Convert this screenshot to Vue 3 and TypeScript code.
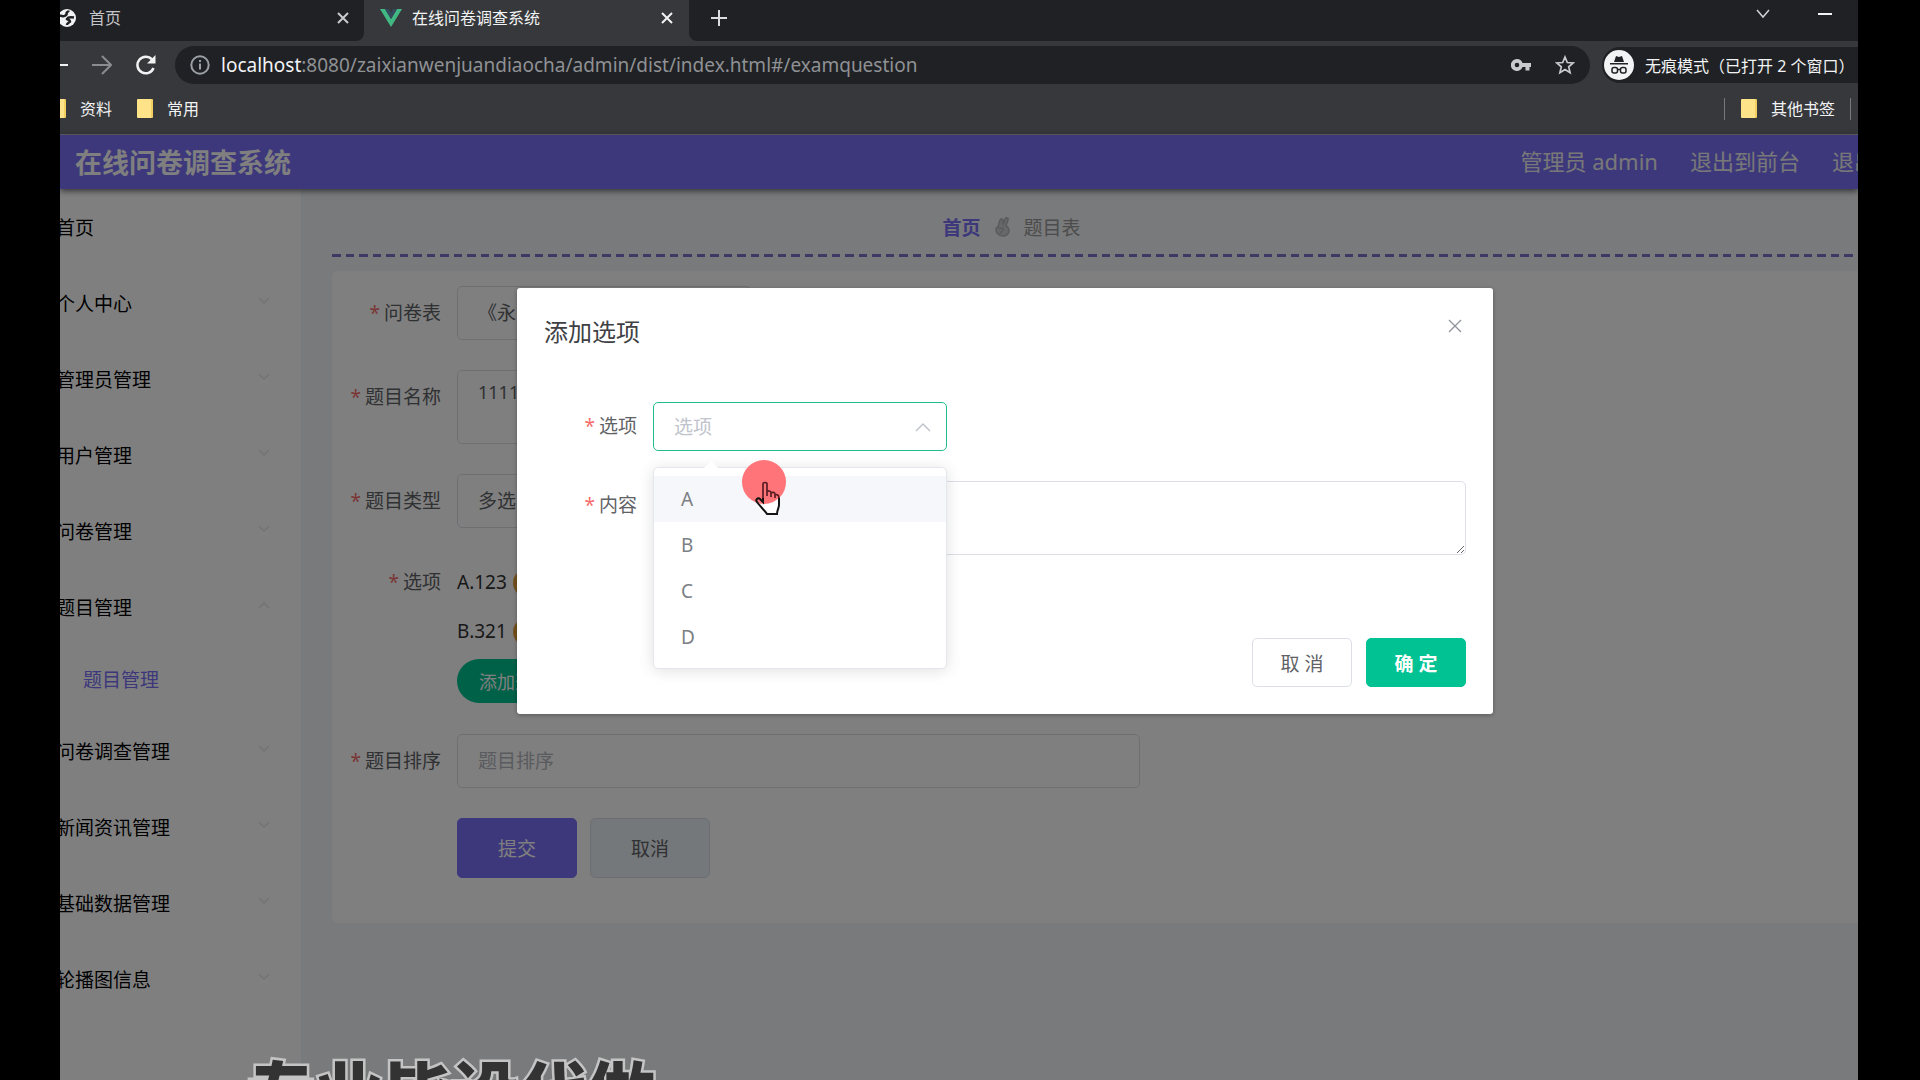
<script setup lang="ts">
import { ref } from 'vue'

interface MenuItem {
  name: string
  arrow?: 'down' | 'up'
  children?: string[]
}

const menu: MenuItem[] = [
  { name: '首页' },
  { name: '个人中心', arrow: 'down' },
  { name: '管理员管理', arrow: 'down' },
  { name: '用户管理', arrow: 'down' },
  { name: '问卷管理', arrow: 'down' },
  { name: '题目管理', arrow: 'up', children: ['题目管理'] },
  { name: '问卷调查管理', arrow: 'down' },
  { name: '新闻资讯管理', arrow: 'down' },
  { name: '基础数据管理', arrow: 'down' },
  { name: '轮播图信息', arrow: 'down' },
]

const answers = ['A.123', 'B.321']
const letters = ['A', 'B', 'C', 'D']
const hovered = ref('A')
const title = ref('1111')
const order = ref('')
const content = ref('')
</script>

<template>
  <div class="stage">
    <div class="browser">
      <div class="tabs">
        <div class="tab idle">
          <svg class="globe" width="18" height="18" viewBox="0 0 18 18">
            <circle cx="9" cy="9" r="9" fill="#f1f3f4" />
            <path d="M1.500 7c2-1 3 1 5 0 1-1 3-1 2-3 0-1 2-1 2-2.500M9 16c0-2 2-2 3-3.500 0-2-2-1.500-3-2.500 1-2 4-2 7-1.500" fill="none" stroke="#202124" stroke-width="2.500" />
          </svg>
          <span class="tab-name">首页</span>
          <button class="icon-btn" type="button">
            <svg width="12" height="12" viewBox="0 0 12 12"><path d="M1 1l10 10M11 1L1 11" stroke="#c8cacd" stroke-width="2" /></svg>
          </button>
        </div>
        <div class="tab current">
          <svg width="22" height="18" viewBox="0 0 22 18">
            <path d="M0 0h5l6 10 6-10h5L11 18z" fill="#41b883" />
            <path d="M5 0h4l2 4 2-4h4l-6 10z" fill="#35495e" />
          </svg>
          <span class="tab-name">在线问卷调查系统</span>
          <button class="icon-btn" type="button">
            <svg width="12" height="12" viewBox="0 0 12 12"><path d="M1 1l10 10M11 1L1 11" stroke="#f1f3f4" stroke-width="2" /></svg>
          </button>
        </div>
        <div class="tab-rest">
          <button class="icon-btn" type="button">
            <svg width="16" height="16" viewBox="0 0 16 16"><path d="M8 0v16M0 8h16" stroke="#dadce0" stroke-width="2" /></svg>
          </button>
          <span class="grow"></span>
          <div class="window-btns">
            <button class="icon-btn" type="button">
              <svg width="14" height="10" viewBox="0 0 14 10"><path d="M1 1l6 7 6-7" fill="none" stroke="#d0d2d5" stroke-width="1.500" /></svg>
            </button>
            <button class="icon-btn" type="button">
              <svg width="14" height="10" viewBox="0 0 14 10"><path d="M0 5h14" stroke="#f1f3f4" stroke-width="2" /></svg>
            </button>
          </div>
        </div>
      </div>

      <div class="toolbar">
        <button class="icon-btn" type="button">
          <svg width="20" height="20" viewBox="0 0 20 20"><path d="M20 10H2M10 1l-9 9 9 9" fill="none" stroke="#f1f3f4" stroke-width="2" /></svg>
        </button>
        <button class="icon-btn" type="button">
          <svg width="20" height="20" viewBox="0 0 20 20"><path d="M0 10h18M10 1l9 9-9 9" fill="none" stroke="#8b8c8f" stroke-width="2" /></svg>
        </button>
        <button class="icon-btn" type="button">
          <svg width="20" height="20" viewBox="0 0 20 20">
            <path d="M17.500 13A8.300 8.300 0 1 1 16 4.500" fill="none" stroke="#f1f3f4" stroke-width="2.500" />
            <path d="M19.500 0v8.500H11z" fill="#f1f3f4" />
          </svg>
        </button>
        <div class="address">
          <svg width="20" height="20" viewBox="0 0 20 20">
            <circle cx="10" cy="10" r="8.700" fill="none" stroke="#9aa0a6" stroke-width="2" />
            <path d="M10 8.500v6M10 5v2" stroke="#9aa0a6" stroke-width="2" />
          </svg>
          <span class="url"><b>localhost</b>:8080/zaixianwenjuandiaocha/admin/dist/index.html#/examquestion</span>
          <button class="icon-btn" type="button">
            <svg width="20" height="12" viewBox="0 0 20 12">
              <path fill-rule="evenodd" d="M6 0a6 6 0 0 1 5.500 4H20v4h-1.500v3.500h-4V8h-3A6 6 0 1 1 6 0zm0 3.700a2.300 2.300 0 1 0 0 4.600 2.300 2.300 0 0 0 0-4.600z" fill="#c8cacd" />
            </svg>
          </button>
          <button class="icon-btn" type="button">
            <svg width="20" height="20" viewBox="0 0 20 20">
              <path d="M10 2l2.300 5.500 5.900.500-4.500 3.900 1.400 5.800L10 14.600l-5.100 3.100 1.400-5.800L1.800 8l5.900-.500z" fill="none" stroke="#c8cacd" stroke-width="1.700" />
            </svg>
          </button>
        </div>
        <div class="incognito">
          <svg width="30" height="30" viewBox="0 0 30 30">
            <circle cx="15" cy="15" r="15" fill="#f1f3f4" />
            <path d="M10 12l2-6 3 1 3-1 2 6zM6 13h18v1.500H6z" fill="#202124" />
            <rect x="8" y="17.500" width="5.500" height="5.500" rx="2" fill="none" stroke="#202124" stroke-width="1.500" />
            <rect x="16.500" y="17.500" width="5.500" height="5.500" rx="2" fill="none" stroke="#202124" stroke-width="1.500" />
            <path d="M13.500 19.500h3" stroke="#202124" stroke-width="1.500" />
          </svg>
          <span>无痕模式（已打开 2 个窗口）</span>
        </div>
      </div>

      <div class="bookmarks">
        <a href="#" class="bookmark"><i class="folder"></i>资料</a>
        <a href="#" class="bookmark"><i class="folder"></i>常用</a>
        <span class="grow"></span>
        <a href="#" class="bookmark others"><i class="folder"></i>其他书签</a>
      </div>

      <div class="app">
        <header class="app-header">
          <h1>在线问卷调查系统</h1>
          <nav class="user-links">
            <span>管理员 admin</span>
            <a href="#">退出到前台</a>
            <a href="#">退出登录</a>
          </nav>
        </header>

        <div class="app-body">
          <aside class="sidebar">
            <template v-for="item in menu" :key="item.name">
              <a href="#" class="menu-item">
                <span>{{ item.name }}</span>
                <svg v-if="item.arrow" :class="item.arrow" width="12" height="8" viewBox="0 0 12 8">
                  <path d="M1 1l5 5 5-5" fill="none" stroke="#e6e6e6" stroke-width="1.500" />
                </svg>
              </a>
              <a v-for="child in item.children" :key="child" href="#" class="menu-child">{{ child }}</a>
            </template>
          </aside>

          <main class="main">
            <nav class="crumbs">
              <a href="#">首页</a>
              <svg width="15" height="20" viewBox="0 0 15 20" fill="none" stroke="#b4b6ba" stroke-width="1.500">
                <path d="M3 10L5 3c1-2 3-1 3 0v5l2-6c1-2 4-1 3 1l-2 6c3 1 3 3 3 5 0 3-3 5-6 5s-7-2-7-6c0-2 1-4 3-3z" fill="#cdd0d4" />
                <path d="M4 12c2-2 5-1 4 1s-3 2-3 4" />
              </svg>
              <span>题目表</span>
            </nav>
            <div class="dashes"></div>

            <form class="card" @submit.prevent>
              <div class="row">
                <label class="label" for="paper">问卷表</label>
                <select id="paper" class="field short"><option>《永</option></select>
              </div>
              <div class="row">
                <label class="label" for="title">题目名称</label>
                <textarea id="title" v-model="title" class="field area"></textarea>
              </div>
              <div class="row">
                <label class="label" for="kind">题目类型</label>
                <select id="kind" class="field short"><option>多选</option></select>
              </div>
              <div class="row answers">
                <span class="label">选项</span>
                <div class="answer-list">
                  <div v-for="a in answers" :key="a" class="answer">
                    <span>{{ a }}</span>
                    <button type="button" class="remove"></button>
                  </div>
                  <button type="button" class="add">添加选项</button>
                </div>
              </div>
              <div class="row">
                <label class="label" for="order">题目排序</label>
                <input id="order" v-model="order" class="field wide" type="text" placeholder="题目排序" />
              </div>
              <div class="actions">
                <button type="submit" class="submit">提交</button>
                <button type="button" class="reset">取消</button>
              </div>
            </form>
          </main>
        </div>

        <div class="mask">
          <section class="dialog" role="dialog">
            <div class="dialog-head">
              <h2>添加选项</h2>
              <button class="icon-btn" type="button">
                <svg width="14" height="14" viewBox="0 0 14 14"><path d="M1 1l12 12M13 1L1 13" stroke="#909399" stroke-width="1.300" /></svg>
              </button>
            </div>
            <div class="dialog-row">
              <label class="label" for="letter">选项</label>
              <div class="picker">
                <select id="letter" class="picker-box"><option>选项</option></select>
                <svg class="picker-arrow" width="16" height="10" viewBox="0 0 16 10">
                  <path d="M1 9l7-7 7 7" fill="none" stroke="#c0c4cc" stroke-width="1.500" />
                </svg>
                <ul class="options" role="listbox">
                  <li
                    v-for="l in letters"
                    :key="l"
                    role="option"
                    :class="{ hover: l === hovered }"
                    @mouseenter="hovered = l"
                  >{{ l }}</li>
                </ul>
              </div>
            </div>
            <div class="dialog-row">
              <label class="label" for="content">内容</label>
              <textarea id="content" v-model="content" class="field area full"></textarea>
            </div>
            <div class="dialog-foot">
              <button type="button" class="cancel">取 消</button>
              <button type="button" class="confirm">确 定</button>
            </div>
            <div class="pointer">
              <svg width="44" height="56" viewBox="0 0 44 56">
                <circle cx="22" cy="22" r="22" fill="#ff7479" />
                <path d="M14 44a22 22 0 0 0 23-6l1 3-3 9-3 4H24l-5-3z" fill="#fff" />
                <path d="M21 39V24c0-2 4-2 4 0v9M25 36v-4c1-2 4-1 4 1v4M29 37v-4c1-1 4-1 4 1v4M33 38v-3c2-1 4 0 4 3" fill="none" stroke="#5c1c24" stroke-width="1.700" />
                <path d="M37 38v7c0 3-2 5-2 9H25c-2-3-8-9-10-12-2-2 1-5 3-3l3 3v-4" fill="none" stroke="#141414" stroke-width="2" />
              </svg>
            </div>
          </section>
        </div>
      </div>
      <div class="caption">专业毕设代做</div>
    </div>
  </div>
</template>

<style>
body {
  background: #000;
}
</style>

<style scoped>
.stage {
  height: 100vh;
  padding: 0 62px 0 60px;
  background: #000;
  font-family: 'Noto Sans', 'Noto Sans CJK SC', sans-serif;
}
.stage *,
.stage {
  box-sizing: border-box;
}
.browser {
  position: relative;
  display: flex;
  flex-direction: column;
  height: 100%;
  overflow: hidden;
  background: #37383b;
}
button,
input,
select,
textarea {
  font-family: inherit;
  margin: 0;
}
a {
  color: inherit;
  text-decoration: none;
}
svg {
  display: block;
  flex: none;
}
.grow {
  flex: 1;
}
.icon-btn {
  display: flex;
  flex: none;
  padding: 0;
  border: 0;
  background: none;
}

/* browser chrome */
.tabs {
  display: flex;
  height: 41px;
  font-size: 16px;
  line-height: 24px;
}
.tab {
  display: flex;
  align-items: center;
  flex: none;
  padding-bottom: 5px;
  white-space: nowrap;
}
.tab-name {
  flex: 1;
}
.idle {
  width: 304px;
  padding-right: 15px;
  border-radius: 0 0 8px 0;
  background: #202124;
  color: #c4c6c9;
}
.globe {
  margin: 0 13px 0 -2px;
}
.current {
  width: 325px;
  gap: 10px;
  padding-left: 16px;
  padding-right: 16px;
  color: #f1f3f4;
}
.tab-rest {
  display: flex;
  align-items: center;
  flex: 1;
  padding: 0 26px 6px 22px;
  border-radius: 0 0 0 8px;
  background: #202124;
}
.window-btns {
  display: flex;
  gap: 48px;
  padding-bottom: 8px;
}
.toolbar {
  display: flex;
  align-items: center;
  height: 48px;
}
.toolbar > .icon-btn {
  margin-right: 24px;
}
.toolbar > .icon-btn:first-child {
  margin-left: -12px;
}
.toolbar > .icon-btn:nth-child(3) {
  margin-right: 19px;
}
.address {
  display: flex;
  align-items: center;
  flex: 1;
  height: 38px;
  padding: 0 15px;
  border-radius: 19px;
  background: #202124;
}
.url {
  flex: 1;
  padding-left: 11px;
  color: #8f9195;
  font-size: 19px;
  line-height: 28px;
  white-space: nowrap;
}
.url b {
  color: #f1f3f4;
  font-weight: 400;
}
.address .icon-btn + .icon-btn {
  margin-left: 24px;
}
.incognito {
  display: flex;
  align-items: center;
  flex: none;
  gap: 11px;
  width: 256px;
  height: 36px;
  margin-left: 12px;
  padding-left: 2px;
  border-radius: 18px 0 0 18px;
  background: #202124;
  color: #f1f3f4;
  font-size: 16px;
  white-space: nowrap;
}
.bookmarks {
  display: flex;
  align-items: center;
  height: 46px;
  padding: 0 7px 6px 0;
  border-bottom: 1px solid #606166;
  color: #f1f3f4;
  font-size: 16px;
  line-height: 22px;
}
.bookmark {
  display: flex;
  align-items: center;
  gap: 14px;
  margin-right: 25px;
}
.bookmark:first-child {
  margin-left: -10px;
}
.folder {
  width: 16px;
  height: 19px;
  border-radius: 1px;
  border-right: 2px solid #f3cf62;
  background: #ffe389;
}
.others {
  margin-right: 0;
  padding: 0 15px 0 16px;
  border-left: 1px solid #77787c;
  border-right: 1px solid #77787c;
}

/* admin page */
.app {
  position: relative;
  display: flex;
  flex-direction: column;
  flex: 1;
  min-height: 0;
}
.app-header {
  position: relative;
  display: flex;
  align-items: center;
  justify-content: space-between;
  height: 54px;
  padding-left: 15px;
  background: #7a70f6;
  box-shadow: 0 2px 6px rgba(0, 0, 0, 0.6);
  color: #fff;
}
.app-header h1 {
  margin: 0;
  font-size: 27px;
  line-height: 40px;
  padding-top: 2px;
}
.user-links {
  display: flex;
  gap: 32px;
  margin-right: -62px;
  padding-bottom: 2px;
  color: #f0f0f0;
  font-size: 22px;
  line-height: 30px;
  white-space: nowrap;
}
.app-body {
  display: flex;
  flex: 1;
  min-height: 0;
}
.sidebar {
  flex: none;
  width: 241px;
  padding-top: 1px;
  background: #fff;
  font-size: 19px;
  line-height: 28px;
  color: #000;
}
.menu-item {
  display: flex;
  align-items: center;
  justify-content: space-between;
  height: 76px;
  margin-left: -4px;
  padding-right: 31px;
}
.menu-item svg {
  margin-bottom: 6px;
}
.up {
  transform: rotate(180deg);
}
.menu-child {
  display: flex;
  align-items: center;
  height: 68px;
  padding-left: 23px;
  color: #7a70f6;
}
.main {
  flex: 1;
  min-width: 0;
  padding: 23px 0 0 31px;
  background: #f2f4f7;
}
.crumbs {
  display: flex;
  align-items: center;
  justify-content: center;
  gap: 14px;
  height: 30px;
  padding-right: 167px;
  color: #999;
  font-size: 19px;
}
.crumbs a {
  color: #7a70f6;
  font-weight: 700;
}
.dashes {
  height: 3px;
  margin: 12px 0 14px;
  background: repeating-linear-gradient(
    to right,
    #7a70c8 0 9px,
    transparent 9px 14px,
    #7a70c8 14px 22px,
    transparent 22px 27px
  );
}
.card {
  display: flex;
  flex-direction: column;
  gap: 30px;
  padding: 15px 0 45px;
  border-radius: 6px 0 0 6px;
  background: #fff;
}
.row,
.dialog-row {
  display: flex;
}
.label {
  flex: none;
  width: 109px;
  margin-right: 16px;
  color: #606266;
  font-size: 19px;
  line-height: 54px;
  text-align: right;
}
.label::before {
  content: '*';
  margin-right: 4px;
  color: #f56c6c;
}
.field {
  display: block;
  height: 54px;
  padding: 0 20px;
  border: 1px solid #dcdfe6;
  border-radius: 5px;
  outline: 0;
  appearance: none;
  background: #fff;
  color: #606266;
  font-size: 19px;
}
.field::placeholder {
  color: #b4b7bd;
}
.short {
  width: 294px;
}
.wide {
  width: 683px;
}
.area {
  width: 683px;
  height: 74px;
  padding: 8px 20px;
  font-size: 18px;
  line-height: 26px;
}
.answer-list {
  color: #303133;
  font-size: 19px;
  line-height: 49px;
}
.answer {
  display: flex;
  align-items: center;
  gap: 6px;
  height: 49px;
}
.remove {
  width: 60px;
  height: 28px;
  border: 0;
  border-radius: 14px;
  background: #e6a23c;
}
.add {
  display: block;
  height: 44px;
  margin: 3px 0 1px;
  padding: 0 22px;
  border: 0;
  border-radius: 22px;
  background: #00c292;
  color: #fff;
  font-size: 18px;
}
.answers .label {
  line-height: 49px;
}
.actions {
  display: flex;
  gap: 13px;
  padding-left: 125px;
}
.actions button {
  width: 120px;
  height: 60px;
  border: 1px solid #7a70f6;
  border-radius: 5px;
  background: #7a70f6;
  color: #fff;
  font-size: 19px;
}
.actions .reset {
  border-color: #d6dfe8;
  background: #eaf0f4;
  color: #606266;
}

/* dialog */
.mask {
  position: absolute;
  inset: 0;
  display: flex;
  align-items: flex-start;
  padding: 153px 365px 0 457px;
  background: rgba(0, 0, 0, 0.5);
}
.dialog {
  position: relative;
  flex: 1;
  padding: 27px;
  border-radius: 3px;
  background: #fff;
  box-shadow: 0 1px 4px rgba(0, 0, 0, 0.3);
}
.dialog-head {
  display: flex;
  justify-content: space-between;
  padding-right: 4px;
  margin-bottom: 53px;
}
.dialog-head .icon-btn {
  margin-top: 4px;
}
.dialog h2 {
  margin: 0;
  color: #404144;
  font-size: 24px;
  font-weight: 400;
  line-height: 34px;
}
.dialog-row {
  margin-bottom: 30px;
}
.dialog-row .label {
  width: 93px;
  line-height: 49px;
}
.picker {
  position: relative;
  width: 294px;
  height: 49px;
}
.picker-box {
  display: block;
  width: 100%;
  height: 100%;
  padding: 0 20px;
  border: 1px solid #22bd8f;
  border-radius: 5px;
  outline: 0;
  appearance: none;
  background: #fff;
  color: #c0c4cc;
  font-size: 19px;
}
.picker-arrow {
  position: absolute;
  right: 16px;
  top: 20px;
}
.options {
  position: absolute;
  z-index: 1;
  top: 65px;
  left: 0;
  width: 100%;
  margin: 0;
  padding: 8px 0;
  border: 1px solid #e4e7ed;
  border-radius: 5px;
  background: #fff;
  box-shadow: 0 2px 15px rgba(0, 0, 0, 0.12);
  list-style: none;
}
.options::before {
  content: '';
  position: absolute;
  top: -7px;
  left: 50px;
  border: 7px solid transparent;
  border-top: 0;
  border-bottom-color: #fff;
}
.options li {
  padding-left: 27px;
  color: #7c7f84;
  font-size: 19px;
  line-height: 46px;
}
.options .hover {
  background: #f5f7fa;
}
.full {
  flex: 1;
  width: auto;
}
.dialog-foot {
  display: flex;
  justify-content: flex-end;
  gap: 14px;
  margin-top: 83px;
}
.dialog-foot button {
  width: 100px;
  height: 49px;
  border: 1px solid #dcdfe6;
  border-radius: 5px;
  background: #fff;
  color: #606266;
  font-size: 19px;
}
.dialog-foot .confirm {
  border-color: #00c292;
  background: #00c292;
  color: #fff;
  font-weight: 700;
}
.pointer {
  position: absolute;
  z-index: 2;
  left: 225px;
  top: 172px;
}
.caption {
  position: absolute;
  left: 187px;
  bottom: -54px;
  color: #333;
  font-family: 'Noto Sans CJK SC', sans-serif;
  font-size: 68px;
  font-weight: 900;
  line-height: 88px;
  white-space: nowrap;
  -webkit-text-stroke: 5px #c4c4c4;
  paint-order: stroke fill;
}
</style>
